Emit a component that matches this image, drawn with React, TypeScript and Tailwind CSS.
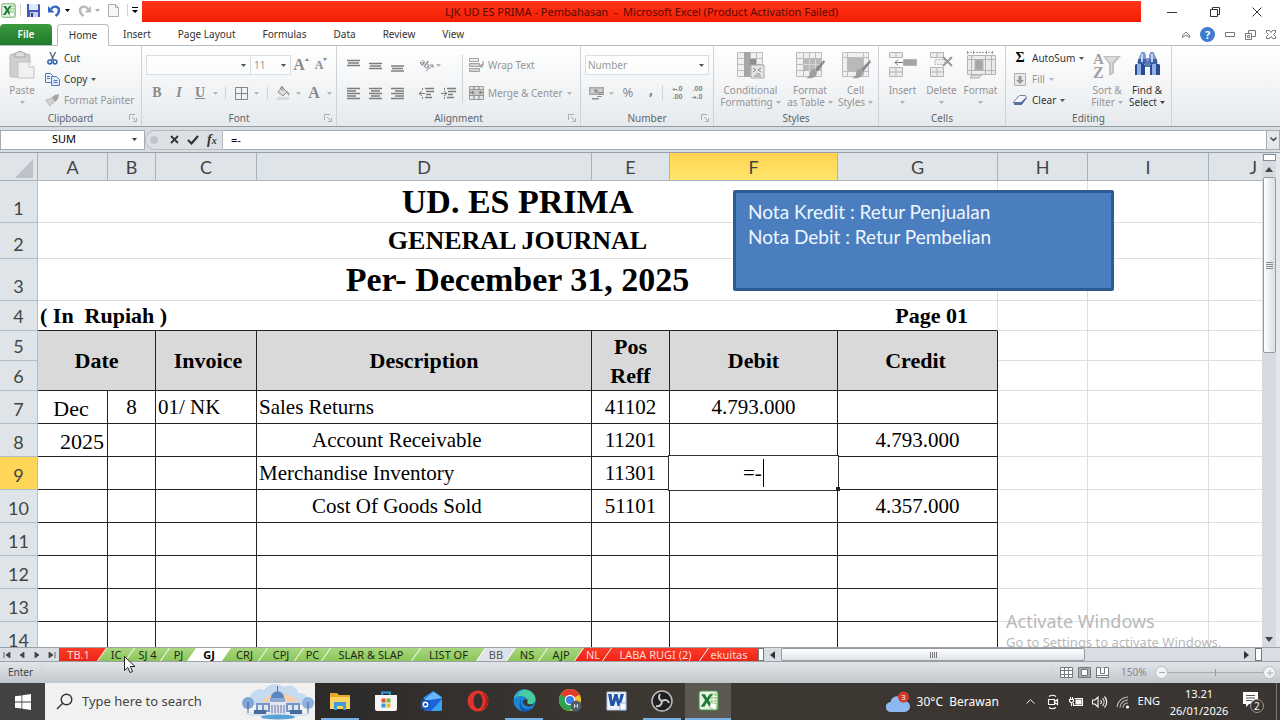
import React from 'react';
import { ChevronUp } from 'lucide-react';

const Caret = ({ className = 'text-gray-600' }: { className?: string }) => (
  <svg width="5" height="3" viewBox="0 0 5 3" className={`shrink-0 ${className}`} fill="currentColor">
    <path d="M0 0h5L2.5 3z" />
  </svg>
);

const Sep = ({ className = 'h-4' }: { className?: string }) => (
  <span className={`w-px shrink-0 bg-[#d0d3d6] ${className}`} />
);

/* ---------- Ribbon building blocks ---------- */

interface GroupProps {
  label: string;
  width: string;
  launcher?: boolean;
  children: React.ReactNode;
}

const Group: React.FC<GroupProps> = ({ label, width, launcher, children }) => (
  <section aria-label={label} className={`flex shrink-0 flex-col border-r border-[#cfd3d7] ${width}`}>
    <div className="flex h-16 min-h-0">{children}</div>
    <div className="flex h-4 items-center">
      <span className="w-4" />
      <span className="flex-1 text-center text-[#5d656d]">{label}</span>
      <span className="flex w-4 justify-center">
        {launcher && (
          <button aria-label={`${label} settings`}>
            <svg width="8" height="8" viewBox="0 0 8 8" fill="none" stroke="#a9aeb3">
              <path d="M.5 6V.5H6M3 3l3.5 3.5M7.5 4v3.5H4" />
            </svg>
          </button>
        )}
      </span>
    </div>
  </section>
);

interface IconButtonProps {
  label: string;
  width?: string;
  children: React.ReactNode;
}

const IconButton: React.FC<IconButtonProps> = ({ label, width = 'w-[22px]', children }) => (
  <button aria-label={label} className={`flex h-5 shrink-0 items-center justify-center text-[#8a8a8a] ${width}`}>
    {children}
  </button>
);

interface BigButtonProps {
  icon: React.ReactNode;
  lines: string[];
  width: string;
  active?: boolean;
}

const BigButton: React.FC<BigButtonProps> = ({ icon, lines, width, active }) => (
  <button
    className={`flex shrink-0 flex-col items-center pt-[5px] leading-3 ${width} ${active ? 'text-[#333]' : 'text-[#959595]'}`}
  >
    <span className="flex h-[33px] items-start justify-center">{icon}</span>
    <span className="whitespace-nowrap">{lines[0]}</span>
    <span className="flex h-3 items-center gap-[3px] whitespace-nowrap">
      {lines[1]}
      <Caret className={active ? 'text-[#444]' : 'text-[#b0b0b0]'} />
    </span>
  </button>
);

const SmallButton = ({ icon, label, active, caret }: { icon: React.ReactNode; label: string; active?: boolean; caret?: boolean }) => (
  <button className={`flex h-5 items-center gap-1 whitespace-nowrap ${active ? 'text-[#333]' : 'text-[#959595]'}`}>
    <span className="flex w-4 justify-center">{icon}</span>
    {label}
    {caret && <Caret className={active ? 'text-[#555]' : 'text-[#b5b5b5]'} />}
  </button>
);

/* ---------- Icons ---------- */

const ExcelMark = ({ size }: { size: number }) => (
  <svg width={size} height={size} viewBox="0 0 20 20">
    <rect x="1" y="1" width="18" height="18" rx="2" fill="#e9f5e4" stroke="#4c9a4a" />
    <path d="M12 3h6v14h-6z" fill="#9fd08f" />
    <path d="M12 6h6M12 9h6M12 12h6M15 3v11" stroke="#fff" strokeWidth=".8" />
    <path d="M3 4h3.6l2 3.6L11 4h3l-3.8 5.7L14.5 16h-3.8l-2.3-4-2.3 4H2.5l4.3-6.3z" fill="#1f7a35" />
    <path d="M12 12l6 1-1 6-6-2z" fill="#fff" stroke="#7fb877" strokeWidth=".7" />
  </svg>
);

const SaveIcon = () => (
  <svg width="15" height="15" viewBox="0 0 15 15">
    <path d="M1 1h12l1 1v12H1z" fill="#4557b8" />
    <path d="M3 1h9v6H3z" fill="#dfe8fa" />
    <path d="M4 9h8v5H4z" fill="#c9cfe6" />
    <path d="M5 10h2v4H5z" fill="#2c3a86" />
  </svg>
);

const UndoIcon = ({ color, flip }: { color: string; flip?: boolean }) => (
  <svg width="13" height="13" viewBox="0 0 13 13" fill="none" className={flip ? '-scale-x-100' : ''}>
    <path d="M3 5C6 1 11 2.500 11 6.500c0 2.500-1.500 4-3.500 5.500" stroke={color} strokeWidth="2.400" />
    <path d="M0 2v6.500h6.500z" fill={color} />
  </svg>
);

const PasteIcon = () => (
  <svg width="26" height="28" viewBox="0 0 26 28">
    <rect x="1" y="3" width="20" height="23" rx="2" fill="#cfcfd1" stroke="#b9b9bb" />
    <path d="M6 2h2l1-1.500h4L14 2h2v4H6z" fill="#dedede" stroke="#a5a5a7" />
    <path d="M9 11h11l5 5v11H9z" fill="#f1f1f3" stroke="#c2c2c6" />
    <path d="M20 11v5h5" fill="#fff" stroke="#c2c2c6" />
  </svg>
);

const CutIcon = () => (
  <svg width="11" height="13" viewBox="0 0 11 13" fill="none">
    <path d="M3 0l3.500 8M8.500 0L4.500 8" stroke="#53647c" strokeWidth="1.300" />
    <circle cx="2.800" cy="10" r="1.900" stroke="#2e62b4" strokeWidth="1.500" />
    <circle cx="8" cy="10" r="1.900" stroke="#2e62b4" strokeWidth="1.500" />
  </svg>
);

const CopyIcon = () => (
  <svg width="15" height="13" viewBox="0 0 15 13" stroke="#4f7bbd">
    <path d="M.5.5h5l2 2v7h-7z" fill="#eaf2fd" />
    <path d="M2 3.500h3M2 5.500h3" />
    <path d="M6.500 3.500h5l3 3v6h-8z" fill="#dbe9fb" />
    <path d="M8.500 7.500h4M8.500 9.500h4" />
  </svg>
);

const BrushIcon = () => (
  <svg width="15" height="13" viewBox="0 0 15 13">
    <path d="M0 6l7-3 3 5-5 5z" fill="#c4c4c4" />
    <path d="M7 3l3-2 4-1-1 5-3 3z" fill="#a3a3a3" />
    <path d="M3 6l4 5M5 5l4 4" stroke="#e8e8e8" />
  </svg>
);

const BordersIcon = () => (
  <svg width="13" height="13" viewBox="0 0 13 13" fill="none" stroke="#858585">
    <path d="M.5.5h12v12H.5zM6.500.5v12M.5 6.500h12" />
  </svg>
);

const BucketIcon = () => (
  <svg width="15" height="14" viewBox="0 0 15 14">
    <path d="M6 1l5 5-4 4-5-4z" fill="#ddd" stroke="#8e8e8e" />
    <path d="M5 4V1.500a1 1 0 012 0V5" fill="none" stroke="#8e8e8e" />
    <path d="M11 5c2 1 3 3 2 5-1-2-2-3-3-3z" fill="#999" />
    <path d="M1 11h12v3H1z" fill="#dadada" />
  </svg>
);

const LinesIcon = ({ d }: { d: string }) => (
  <svg width="13" height="13" viewBox="0 0 13 13" fill="none" stroke="#7d7d7d" strokeWidth="1.300">
    <path d={d} />
  </svg>
);

const IndentIcon = ({ right }: { right?: boolean }) => (
  <svg width="15" height="13" viewBox="0 0 15 13" fill="none" stroke="#7d7d7d">
    <path d={right ? 'M0 6.500h6M6 6.500L3 4M6 6.500L3 9M3.500 1v2M3.500 10v2' : 'M0 6.500h6M0 6.500L3 4M0 6.500L3 9M3.500 1v2M3.500 10v2'} />
    <path d="M6 1.500h9M7 4.500h8M7 7.500h5M6 10.500h7" strokeWidth="1.600" />
  </svg>
);

const OrientationIcon = () => (
  <svg width="15" height="14" viewBox="0 0 15 14" fill="none" stroke="#8a8a8a">
    <path d="M6 13l7-6M10 7h3v3" />
    <text x="0" y="8" fontSize="10" fontWeight="bold" fill="#8a8a8a" stroke="none" fontFamily="Liberation Serif, serif" transform="rotate(38 4 5)">
      ab
    </text>
  </svg>
);

const WrapIcon = () => (
  <svg width="15" height="14" viewBox="0 0 15 14" stroke="#a3a3a3">
    <path d="M.5.500h9v3h-9z" fill="#eee" />
    <path d="M.5 5.500h10v3h-10zM.5 10.500h10v3h-10z" fill="#d2d2d2" />
    <path d="M14 3v5h-2M13 6l-2 2 2 2" fill="none" stroke="#888" />
  </svg>
);

const MergeIcon = () => (
  <svg width="15" height="14" viewBox="0 0 15 14" stroke="#9a9a9a">
    <path d="M.5.500h14v13H.5z" fill="#e6e6e6" />
    <path d="M.5 3.500h14v6H.5z" fill="#c8c8c8" />
    <path d="M5 .5v3M10 .5v3M5 9.500v4M10 9.500v4M1 6.500h4M10 6.500h4M3 5l2 1.500L3 8M12 5l-2 1.500L12 8" fill="none" stroke="#808080" />
  </svg>
);

const MoneyIcon = () => (
  <svg width="16" height="14" viewBox="0 0 16 14">
    <path d="M0 1h15v8H0z" fill="#a9a9a9" />
    <path d="M1.500 2.500h12v5h-12z" fill="#cfcfcf" />
    <circle cx="7" cy="5" r="2" fill="#999" />
    <path d="M9 6h5v1H9zM9 8h5v1H9zM8 10h5v1H8zM3 12h7v1.500H3z" fill="#8f8f8f" />
  </svg>
);

const gridPath = 'M1.500 1.500h25v24h-25zM1.500 7.500h25M1.500 13.500h25M1.500 19.500h25M8.500 1.500v24M14.500 1.500v24M20.500 1.500v24';

const ConditionalIcon = () => (
  <svg width="30" height="28" viewBox="0 0 30 28">
    <path d={gridPath} fill="#f1eff1" stroke="#bfbcbf" />
    <path d="M8 1h6v25H8z" fill="#a7a4a7" />
    <path d="M14 8h6v6h-6z" fill="#8f8c8f" />
    <path d="M15 14h13v13H15z" fill="#e5e3e5" stroke="#aaa" />
    <path d="M17 17l3 2-3 2M25 17l-3 2 3 2M18 25h7M20 23h4" fill="none" stroke="#888" />
  </svg>
);

const TableStyleIcon = ({ cell }: { cell?: boolean }) => (
  <svg width="30" height="28" viewBox="0 0 30 28">
    <path d={cell ? 'M1.500 1.500h26v24h-26zM1.500 6.500h26M1.500 20.500h26M6.500 1.500v24M22.500 1.500v24' : gridPath} fill="#f1eff1" stroke="#bfbcbf" />
    <path d={cell ? 'M7 7h15v13H7z' : 'M8 8h18v12H8z'} fill="#bab8ba" />
    {!cell && <path d="M14.500 8v12M20.500 8v12M8 13.500h18" stroke="#d8d6d8" />}
    <path d="M29 9l-9 9 2 3 8-10z" fill="#8c898c" />
    <path d="M19 18c-3 0-4 3-4 5s-2 3-4 4c5 1 11 0 11-6z" fill="#a19ea1" />
  </svg>
);

const InsertIcon = () => (
  <svg width="30" height="28" viewBox="0 0 30 28" stroke="#b5b3b5">
    <path d="M1.500 1.500h13v5h-13zM1.500 16.500h13v9h-13zM8 1.500v5M8 16.500v9M1.500 21h13" fill="#eceaec" />
    <path d="M15.500 8.500h13v6h-13z" fill="#a5a3a5" />
    <path d="M7 11.500h8M10 8.500l-3 3 3 3" fill="none" stroke="#777" />
  </svg>
);

const DeleteIcon = () => (
  <svg width="26" height="28" viewBox="0 0 26 28" stroke="#b5b3b5">
    <path d="M1.500 1.500h13v5h-13zM1.500 16.500h13v9h-13zM8 1.500v5M8 16.500v9M1.500 21h13" fill="#eceaec" />
    <path d="M6 8.500h10v5H6z" fill="#eee" strokeDasharray="2 1" />
    <path d="M14 6l9 9M23 6l-9 9" fill="none" stroke="#999" strokeWidth="2" />
  </svg>
);

const FormatIcon = () => (
  <svg width="30" height="28" viewBox="0 0 30 28" stroke="#b5b3b5">
    <path d="M1 1.500h26" stroke="#999" strokeDasharray="2 1" />
    <path d="M1.500 0v3M7.500 0v3M20.500 0v3M26.500 0v3" stroke="#999" />
    <path d="M1.500 4.500h28v19h-28z" fill="#eceaec" />
    <path d="M5.500 4.500v19M19.500 4.500v19M25.500 4.500v19M1.500 8.500h28M1.500 19.500h28" />
    <path d="M9 9h8v10H9z" fill="#a7a4a7" />
    <path d="M6 24h10l-3 3H4z" fill="#ddd" />
  </svg>
);

const SortIcon = () => (
  <svg width="28" height="28" viewBox="0 0 28 28">
    <path d="M10 5h18l-7 8v9l-5 3V13z" fill="#c3c1c3" />
    <path d="M12 6h12l-5 6v9l-1 1V12z" fill="#dddbdd" />
    <text x="0" y="13" fontSize="15" fontWeight="bold" fill="#a5a3a5" fontFamily="Liberation Serif, serif">A</text>
    <text x="0" y="27" fontSize="16" fontWeight="bold" fill="#a09ea0" fontFamily="Liberation Serif, serif">Z</text>
  </svg>
);

const BinocularsIcon = () => (
  <svg width="27" height="25" viewBox="0 0 27 25">
    <path d="M6 4l1.500-3h3L12 4v3h3V4l1.500-3h3L21 4l3 8H3z" fill="#7c9ad0" />
    <path d="M4 8h8v5H4zM15 8h8v5h-8z" fill="#3d5fa6" />
    <path d="M1 14l1-1h8l1 1v10H1zM16 14l1-1h8l1 1v10H16z" fill="#2b4b93" />
    <path d="M3 13h4v11H3zM18 13h4v11h-4z" fill="#8fb0e6" />
    <path d="M11 10h5v6h-5z" fill="#5878b7" />
    <path d="M7 3h2v8H7zM17 3h2v8h-2z" fill="#c3d3f2" />
  </svg>
);

const FillIcon = () => (
  <svg width="12" height="13" viewBox="0 0 12 13">
    <path d="M.5.500h11v12H.5z" fill="#e8e8e8" stroke="#b0b0b0" />
    <path d="M4.500 3h3v4H10l-4 4-4-4h2.500z" fill="#9b9b9b" />
  </svg>
);

const EraserIcon = () => (
  <svg width="14" height="12" viewBox="0 0 14 12">
    <path d="M6.500 1.500h6l1 2-5 7h-7L.5 8z" fill="#f3f6fb" stroke="#6c80a6" />
    <path d="M1 8h7l5.500-5v1.500L8.500 11h-7z" fill="#58709e" />
  </svg>
);

const WindowsLogo = () => (
  <svg width="16" height="16" viewBox="0 0 16 16" fill="#fff">
    <path d="M0 2.300l6.500-.9v6.200H0zM7.300 1.300L16 0v7.600H7.300zM0 8.400h6.500v6.200L0 13.700zM7.300 8.400H16V16l-8.700-1.200z" />
  </svg>
);

const SearchIcon = () => (
  <svg width="17" height="17" viewBox="0 0 17 17" fill="none" stroke="#333" strokeWidth="1.400">
    <circle cx="10.500" cy="6.500" r="5.300" />
    <path d="M6.700 10.300L1 16" />
  </svg>
);

const CapitolArt = () => (
  <svg width="72" height="36" viewBox="0 0 72 36">
    <path d="M8 14c0-8 10-10 14-8 3-6 14-8 20-3 6-3 14 0 14 6 8-1 12 6 10 12H6c-2-3 0-6 2-7z" fill="#c7dbf0" />
    <path d="M20 18c3-9 29-12 36 0z" fill="#f7cfae" />
    <path d="M35 2h1v5h-1z" fill="#4a6da8" />
    <path d="M29 14c0-9 13-9 13 0z" fill="#5b86c0" />
    <path d="M28 14h15v5H28z" fill="#8aa9d6" />
    <path d="M14 19h44v9H14z" fill="#7796c6" />
    <path d="M16 21h4v5h-4zM22 21h4v5h-4zM46 21h4v5h-4zM52 21h4v5h-4z" fill="#dfe7f5" />
    <path d="M28 18h16v11H28z" fill="#e9e5ee" />
    <path d="M30 21v8M33 21v8M36 21v8M39 21v8M42 21v8" stroke="#5873a8" />
    <path d="M2 29h68l-6 3H8z" fill="#d9e4f0" />
    <circle cx="6" cy="19" r="6" fill="#7ea5d6" />
    <circle cx="66" cy="19" r="6" fill="#8db2de" />
    <path d="M6 18v11M66 18v11" stroke="#44618f" />
    <path d="M12 26h12v4H12zM48 26h12v4H48z" fill="#456a9f" />
    <ellipse cx="36" cy="33" rx="17" ry="2.500" fill="#5aa0d8" />
  </svg>
);

const FolderIcon = () => (
  <svg width="22" height="20" viewBox="0 0 22 20">
    <path d="M1 2h7l2 2h11v14H1z" fill="#e8a92c" />
    <path d="M1 6h20v12H1z" fill="#fbd35f" />
    <path d="M5 11h12v8h-3v-4H8v4H5z" fill="#3f9bdc" />
  </svg>
);

const StoreIcon = () => (
  <svg width="22" height="22" viewBox="0 0 22 22">
    <path d="M7 5V2.500h8V5" fill="none" stroke="#2f9be0" strokeWidth="1.800" />
    <path d="M0 5h22v14a2 2 0 01-2 2H2a2 2 0 01-2-2z" fill="#f5f5f5" />
    <path d="M6.500 8.500h4v4h-4z" fill="#e8502a" />
    <path d="M11.500 8.500h4v4h-4z" fill="#7db53a" />
    <path d="M6.500 13.500h4v4h-4z" fill="#2d9fe0" />
    <path d="M11.500 13.500h4v4h-4z" fill="#f4b62c" />
  </svg>
);

const OutlookIcon = () => (
  <svg width="22" height="22" viewBox="0 0 22 22">
    <path d="M2 8l10-7 9 6v3L9 15z" fill="#2f8ff0" />
    <path d="M4 9l9-7 8 6-9 6z" fill="#69b8fb" />
    <path d="M3 11l18-3v11a2 2 0 01-2 2H5a2 2 0 01-2-2z" fill="#1c63d6" />
    <path d="M21 9v10a2 2 0 01-2 2h-9z" fill="#38a3f5" />
    <rect x="0" y="10" width="9" height="9" rx="1.500" fill="#1657c0" />
    <circle cx="4.500" cy="14.500" r="2.200" fill="none" stroke="#fff" strokeWidth="1.400" />
  </svg>
);

const OperaIcon = () => (
  <svg width="22" height="22" viewBox="0 0 22 22">
    <circle cx="11" cy="11" r="10.500" fill="#e0332c" />
    <ellipse cx="11" cy="11" rx="4.500" ry="7.500" fill="#35302d" />
    <path d="M15 3c5 4 5 12 0 16 8-2 8-14 0-16z" fill="#a81e1a" />
  </svg>
);

const EdgeIcon = () => (
  <svg width="23" height="23" viewBox="0 0 23 23">
    <circle cx="11.500" cy="11.500" r="11" fill="#1b86d6" />
    <path d="M1 10C2 3 8 0 12 .5c6 .5 11 5 10.500 10.500-.5 4-5 5-8 3.500-1.500-1 .5-2 0-4C13 7 4 5 1 10z" fill="#48cba0" />
    <path d="M1 10C2 3 8 0 12 .5 7 2 6 5 5 6c-2 1-3 2-4 4z" fill="#2ea6d8" />
    <path d="M9 10c-3 3-1 9 4 10 3 .7 6-.5 8-2-2 3-6 5-10 4.500C6 22 5 13 9 10z" fill="#1556a5" />
    <path d="M10.500 11c1-1 3-1 4 0 .5 1.500-1 2.500 0 3.500 2 1.500 5 1 7-.5-1 3-5 4-8 3s-4.500-4-3-6z" fill="#3b382f" />
  </svg>
);

const ChromeIcon = () => (
  <svg width="23" height="23" viewBox="0 0 23 23">
    <circle cx="11" cy="11" r="11" fill="#f4c430" />
    <path d="M11 11L1.500 5.500A11 11 0 0120.500 5.500z" fill="#e33b2e" />
    <path d="M11 11L1.500 5.500A11 11 0 0011 22l4-8z" fill="#2fa24f" />
    <circle cx="11" cy="11" r="5.200" fill="#fff" />
    <circle cx="11" cy="11" r="4" fill="#3b7ded" />
    <circle cx="17" cy="17" r="5.500" fill="#4c5d68" />
    <path d="M15.500 15v4M18.500 15v4M15.500 17h3" stroke="#cfd6da" />
  </svg>
);

const WordIcon = () => (
  <svg width="21" height="20" viewBox="0 0 21 20">
    <path d="M1 1h19v18H1z" fill="#eef3fb" stroke="#b9cbe6" />
    <path d="M2 3h3.500l1 7 2-7h3l1.500 7 1.500-7H18l-3.500 12h-3L10 9l-2 6H4.500z" fill="#1f55a8" />
    <path d="M14 12h6v7h-6z" fill="#fff" stroke="#8eb0de" />
  </svg>
);

const ObsIcon = () => (
  <svg width="22" height="22" viewBox="0 0 22 22">
    <circle cx="11" cy="11" r="10" fill="#1f1e20" stroke="#bdbdbd" strokeWidth="1.500" />
    <path d="M11 11c-3-1-4-4-2-7M11 11c3-2 6-1 7 2M11 11c0 4-3 6-6 5" fill="none" stroke="#c9c9c9" strokeWidth="2" />
  </svg>
);

const CloudIcon = () => (
  <svg width="24" height="22" viewBox="0 0 24 22" className="shrink-0">
    <path d="M5 21a5 5 0 01-.5-10A7 7 0 0118 10a5.500 5.500 0 011 11z" fill="#8db8f2" />
    <circle cx="17.500" cy="6" r="5.500" fill="#cf3a2b" />
    <text x="15" y="9" fontSize="8" fill="#fff" fontFamily="Open Sans, sans-serif">3</text>
  </svg>
);

/* ---------- Data ---------- */

const ribbonTabs = ['Insert', 'Page Layout', 'Formulas', 'Data', 'Review', 'View'];

const columns = [
  { name: 'A', width: 'w-[70px]' },
  { name: 'B', width: 'w-[48px]' },
  { name: 'C', width: 'w-[101px]' },
  { name: 'D', width: 'w-[335px]' },
  { name: 'E', width: 'w-[78px]' },
  { name: 'F', width: 'w-[168px]' },
  { name: 'G', width: 'w-[160px]' },
  { name: 'H', width: 'w-[90px]' },
  { name: 'I', width: 'w-[121px]' },
];

const entries = [
  { row: 7, month: 'Dec', day: '8', invoice: '01/ NK', text: 'Sales Returns', ref: '41102', debit: '4.793.000', credit: '' },
  { row: 8, month: '2025', day: '', invoice: '', text: 'Account Receivable', indent: true, ref: '11201', debit: '', credit: '4.793.000' },
  { row: 9, month: '', day: '', invoice: '', text: 'Merchandise Inventory', ref: '11301', debit: '', credit: '', editing: true },
  { row: 10, month: '', day: '', invoice: '', text: 'Cost Of Goods Sold', indent: true, ref: '51101', debit: '', credit: '4.357.000' },
  { row: 11 },
  { row: 12 },
  { row: 13 },
  { row: 14 },
];

const GREEN = 'bg-linear-to-b from-[#a9d780] to-[#8cc65a] text-[#1c2b10]';
const RED = 'bg-linear-to-b from-[#fb3a28] to-[#ee2415] text-[#ffd9d3]';

const sheetTabs = [
  { name: 'IC', width: 'w-[36px]', tone: GREEN },
  { name: 'SJ 4', width: 'w-[43px]', tone: GREEN },
  { name: 'PJ', width: 'w-[35px]', tone: GREEN },
  { name: 'GJ', width: 'w-[42px]', tone: 'bg-white font-bold text-black' },
  { name: 'CRJ', width: 'w-[45px]', tone: GREEN },
  { name: 'CPJ', width: 'w-[44px]', tone: GREEN },
  { name: 'PC', width: 'w-[35px]', tone: GREEN },
  { name: 'SLAR & SLAP', width: 'w-[98px]', tone: GREEN },
  { name: 'LIST OF', width: 'w-[73px]', tone: GREEN },
  { name: 'BB', width: 'w-[38px]', tone: 'bg-[#dfe4ea] text-[#555]' },
  { name: 'NS', width: 'w-[40px]', tone: GREEN },
  { name: 'AJP', width: 'w-[44px]', tone: GREEN },
  { name: 'NL', width: 'w-[36px]', tone: RED },
  { name: 'LABA RUGI (2)', width: 'w-[105px]', tone: RED },
];

const apps = [
  { name: 'File Explorer', icon: <FolderIcon />, open: true },
  { name: 'Microsoft Store', icon: <StoreIcon /> },
  { name: 'Outlook', icon: <OutlookIcon /> },
  { name: 'Opera', icon: <OperaIcon /> },
  { name: 'Edge', icon: <EdgeIcon />, open: true },
  { name: 'Chrome', icon: <ChromeIcon /> },
  { name: 'Word', icon: <WordIcon /> },
  { name: 'OBS Studio', icon: <ObsIcon />, open: true },
];

/* ---------- Window sections ---------- */

const TitleBar = () => (
  <header className="flex h-6 shrink-0 items-stretch bg-white">
    <div className="flex w-[142px] items-center pb-1">
      <span className="flex w-[20px] justify-start pl-px"><ExcelMark size={15} /></span>
      <Sep className="h-3" />
      <button aria-label="Save" className="ml-[5px]"><SaveIcon /></button>
      <button aria-label="Undo" className="ml-[7px] flex items-center gap-1">
        <UndoIcon color="#3566c0" />
        <Caret className="text-black" />
      </button>
      <button aria-label="Redo" className="ml-2 flex items-center gap-1">
        <UndoIcon color="#b8b8b8" flip />
        <Caret className="text-[#aaa]" />
      </button>
      <button aria-label="New" className="ml-2">
        <svg width="11" height="13" viewBox="0 0 11 13" fill="#f6f6f6" stroke="#adadad">
          <path d="M.5.500h7l3 3v9H.5zM7.500.500v3h3" />
        </svg>
      </button>
      <Sep className="ml-2 h-3" />
      <button aria-label="Customize toolbar" className="ml-1">
        <svg width="6" height="6" viewBox="0 0 6 6"><path d="M0 0h6v1H0zM0 3h6L3 6z" /></svg>
      </button>
    </div>
    <h1 className="my-px mb-[2px] flex-1 bg-linear-to-b from-[#ff3418] to-[#f41c02] text-center text-[11px] leading-[22px] whitespace-pre text-[#560a00]">
      {'LJK UD ES PRIMA - Pembahasan  -  Microsoft Excel (Product Activation Failed)'}
    </h1>
    <div className="flex w-[139px] items-center justify-between pr-[18px] pl-[26px]">
      <button aria-label="Minimize"><svg width="10" height="10" stroke="#333"><path d="M0 5.500h10" /></svg></button>
      <button aria-label="Restore">
        <svg width="10" height="10" fill="none" stroke="#333"><path d="M.5 2.500h7v7h-7zM2.500 2.500v-2h7v7h-2" /></svg>
      </button>
      <button aria-label="Close"><svg width="10" height="10" stroke="#333"><path d="M.5.500l9 9M9.500.500l-9 9" /></svg></button>
    </div>
  </header>
);

const RibbonTabs = () => (
  <nav className="flex h-[22px] shrink-0 items-end border-b border-[#b9bec4] bg-white text-[10px] text-[#333]">
    <button className="h-[21px] w-[52px] rounded-t-sm bg-linear-to-b from-[#3c9a3f] to-[#1f7a2c] font-semibold text-white">File</button>
    <button className="-mb-px ml-[5px] h-[22px] w-[52px] rounded-t-sm border border-b-0 border-[#b9bec4] bg-white">Home</button>
    <div className="ml-[14px] flex h-[21px] items-center gap-[27px]">
      {ribbonTabs.map((tab) => (
        <button key={tab}>{tab}</button>
      ))}
    </div>
    <div className="ml-auto flex h-[21px] items-center gap-[10px] pr-1">
      <button aria-label="Collapse ribbon">
        <svg width="8" height="7" fill="none" stroke="#777"><path d="M.5 4.500L4 1l3.500 3.500v2L4 4 .5 6.500z" /></svg>
      </button>
      <button aria-label="Help" className="h-[15px] w-[15px] rounded-full bg-[#3f7ccb] text-[11px] leading-[15px] font-bold text-white">?</button>
      <button aria-label="Minimize workbook"><svg width="10" height="5" fill="none" stroke="#777"><path d="M.5.500h9v4h-9z" /></svg></button>
      <button aria-label="Restore workbook">
        <svg width="11" height="10" fill="none" stroke="#777"><path d="M.5 3.500h6v6h-6zM2.500 5.500h2v2h-2zM3.500 3.500v-3h7v6h-4" /></svg>
      </button>
      <button aria-label="Close workbook">
        <svg width="10" height="9" fill="none" stroke="#777"><path d="M.5.500h3L5 2.500 6.500.500h3v2L7.500 4.500l2 2v2h-3L5 6.500 3.500 8.500h-3v-2l2-2-2-2z" /></svg>
      </button>
    </div>
  </nav>
);

const Ribbon = () => (
  <div className="flex h-[81px] shrink-0 overflow-hidden border-b border-[#969ca3] bg-linear-to-b from-white to-[#e6eaed] text-[10px]">
    <Group label="Clipboard" width="w-[142px]" launcher>
      <BigButton icon={<PasteIcon />} lines={['Paste', '']} width="w-[44px]" />
      <div className="flex flex-col gap-px pt-[2px]">
        <SmallButton icon={<CutIcon />} label="Cut" active />
        <SmallButton icon={<CopyIcon />} label="Copy" active caret />
        <SmallButton icon={<BrushIcon />} label="Format Painter" />
      </div>
    </Group>

    <Group label="Font" width="w-[195px]" launcher>
      <div className="flex flex-col gap-2 pt-[9px] pl-1">
        <div className="flex h-5 items-center">
          <label className="relative flex h-5 w-[105px] items-center border border-[#dcdfe2] bg-white/60">
            <select aria-label="Font name" className="h-full w-full appearance-none" />
            <span className="pointer-events-none absolute right-1"><Caret /></span>
          </label>
          <label className="relative -ml-px flex h-5 w-[41px] items-center border border-[#dcdfe2] bg-white/60">
            <select aria-label="Font size" className="h-full w-full appearance-none pl-[3px] text-[#999]"><option>11</option></select>
            <span className="pointer-events-none absolute right-1"><Caret /></span>
          </label>
          <IconButton label="Grow font" width="w-[20px]">
            <span className="font-['Liberation_Serif',serif] text-base font-bold">A</span>
            <svg width="4" height="3" className="mb-3" fill="#888"><path d="M0 3h4L2 0z" /></svg>
          </IconButton>
          <IconButton label="Shrink font" width="w-[20px]">
            <span className="font-['Liberation_Serif',serif] text-xs font-bold">A</span>
            <svg width="4" height="3" className="mb-3" fill="#888"><path d="M0 0h4L2 3z" /></svg>
          </IconButton>
        </div>
        <div className="flex h-5 items-center font-['Liberation_Serif',serif] text-sm">
          <IconButton label="Bold"><b>B</b></IconButton>
          <IconButton label="Italic"><b><i>I</i></b></IconButton>
          <IconButton label="Underline" width="w-[20px]"><b className="underline">U</b></IconButton>
          <IconButton label="Underline style" width="w-[11px]"><Caret className="text-[#b5b5b5]" /></IconButton>
          <Sep className="ml-1 h-3" />
          <IconButton label="Borders" width="w-[30px]"><BordersIcon /></IconButton>
          <Caret className="-ml-[2px] text-[#b5b5b5]" />
          <Sep className="ml-2 h-3" />
          <IconButton label="Fill color" width="w-[30px]"><BucketIcon /></IconButton>
          <Caret className="-ml-[2px] text-[#b5b5b5]" />
          <IconButton label="Font color" width="w-[26px]"><b className="text-base">A</b></IconButton>
          <Caret className="text-[#b5b5b5]" />
        </div>
      </div>
    </Group>

    <Group label="Alignment" width="w-[244px]" launcher>
      <div className="flex flex-col gap-2 pt-[9px] pl-[5px]">
        <div className="flex h-5 items-center">
          <IconButton label="Top align"><LinesIcon d="M0 1.500h13M1 4h11M0 6.500h13" /></IconButton>
          <IconButton label="Middle align"><LinesIcon d="M0 4.500h13M1 7h11M0 9.500h13" /></IconButton>
          <IconButton label="Bottom align"><LinesIcon d="M0 7h13M1 9.500h11M0 12h13" /></IconButton>
          <Sep className="mx-[3px]" />
          <IconButton label="Orientation" width="w-[24px]"><OrientationIcon /></IconButton>
          <Caret className="-ml-[3px] text-[#b5b5b5]" />
        </div>
        <div className="flex h-5 items-center">
          <IconButton label="Align left"><LinesIcon d="M0 1.500h13M0 4h9M0 6.500h13M0 9h9M0 11.500h13" /></IconButton>
          <IconButton label="Center"><LinesIcon d="M0 1.500h13M2 4h9M0 6.500h13M2 9h9M0 11.500h13" /></IconButton>
          <IconButton label="Align right"><LinesIcon d="M0 1.500h13M4 4h9M0 6.500h13M4 9h9M0 11.500h13" /></IconButton>
          <Sep className="mx-[3px]" />
          <IconButton label="Decrease indent"><IndentIcon /></IconButton>
          <IconButton label="Increase indent"><IndentIcon right /></IconButton>
        </div>
      </div>
      <Sep className="mt-[9px] ml-[3px] h-[48px]" />
      <div className="flex flex-col gap-2 pt-[9px] pl-[5px]">
        <SmallButton icon={<WrapIcon />} label="Wrap Text" />
        <SmallButton icon={<MergeIcon />} label="Merge & Center" caret />
      </div>
    </Group>

    <Group label="Number" width="w-[133px]" launcher>
      <div className="flex flex-1 flex-col gap-2 px-1 pt-[9px]">
        <label className="relative flex h-5 items-center border border-[#dcdfe2] bg-white/60">
          <select aria-label="Number format" className="h-full w-full appearance-none pl-[2px] text-[#999]"><option>Number</option></select>
          <span className="pointer-events-none absolute right-1"><Caret /></span>
        </label>
        <div className="flex h-5 items-center">
          <IconButton label="Accounting format" width="w-[24px]"><MoneyIcon /></IconButton>
          <Caret className="text-[#b5b5b5]" />
          <IconButton label="Percent" width="w-[28px]"><span className="text-[13px]">%</span></IconButton>
          <IconButton label="Comma" width="w-[18px]"><b className="mb-2 text-base">,</b></IconButton>
          <Sep className="mr-1 ml-[2px] h-4" />
          <IconButton label="Increase decimal" width="w-[20px]">
            <span className="flex flex-col items-end text-[7px] leading-[8px] font-bold">
              <span className="flex items-center">
                <svg width="5" height="5" fill="none" stroke="#888"><path d="M5 2.500H1M2.500 1L1 2.500 2.500 4" /></svg>.0
              </span>
              <span>.00</span>
            </span>
          </IconButton>
          <IconButton label="Decrease decimal" width="w-[20px]">
            <span className="flex flex-col items-end text-[7px] leading-[8px] font-bold">
              <span>.00</span>
              <span className="flex items-center">
                <svg width="5" height="5" fill="none" stroke="#888"><path d="M0 2.500h4M2.500 1L4 2.500 2.500 4" /></svg>.0
              </span>
            </span>
          </IconButton>
        </div>
      </div>
    </Group>

    <Group label="Styles" width="w-[165px]">
      <BigButton icon={<ConditionalIcon />} lines={['Conditional', 'Formatting']} width="w-[73px]" />
      <BigButton icon={<TableStyleIcon />} lines={['Format', 'as Table']} width="w-[46px]" />
      <BigButton icon={<TableStyleIcon cell />} lines={['Cell', 'Styles']} width="w-[45px]" />
    </Group>

    <Group label="Cells" width="w-[127px]">
      <span className="w-1" />
      <BigButton icon={<InsertIcon />} lines={['Insert', '']} width="w-[39px]" />
      <BigButton icon={<DeleteIcon />} lines={['Delete', '']} width="w-[39px]" />
      <BigButton icon={<FormatIcon />} lines={['Format', '']} width="w-[39px]" />
    </Group>

    <Group label="Editing" width="w-[166px]">
      <div className="flex w-[81px] flex-col gap-px pt-[2px] pl-[6px]">
        <SmallButton icon={<b className="font-['Liberation_Serif',serif] text-sm text-black">Σ</b>} label="AutoSum" active caret />
        <SmallButton icon={<FillIcon />} label="Fill" caret />
        <SmallButton icon={<EraserIcon />} label="Clear" active caret />
      </div>
      <BigButton icon={<SortIcon />} lines={['Sort &', 'Filter']} width="w-[40px]" />
      <BigButton icon={<BinocularsIcon />} lines={['Find &', 'Select']} width="w-[40px]" active />
    </Group>
  </div>
);

const FormulaBar = () => (
  <div className="flex h-[26px] shrink-0 items-center border-b border-[#9aa0a8] bg-[#d8dde2] text-[11px] text-black">
    <div className="flex h-5 w-[145px] items-center border border-[#a5abb2] bg-white">
      <input aria-label="Name box" defaultValue="SUM" className="w-[126px] text-center outline-none" />
      <button aria-label="Names" className="ml-[5px]"><Caret className="text-[#333]" /></button>
    </div>
    <div className="flex h-5 w-[78px] items-center gap-2 rounded-l-full border border-[#b4bac0] bg-[#dce1e6] pl-1 text-[#333]">
      <span className="h-2 w-2 rounded-full bg-[#bfc5cb]" />
      <button aria-label="Cancel" className="ml-1">
        <svg width="9" height="9" stroke="#333" strokeWidth="1.800"><path d="M1 1l7 7M8 1L1 8" /></svg>
      </button>
      <button aria-label="Enter">
        <svg width="12" height="10" fill="none" stroke="#333" strokeWidth="2.200"><path d="M1 5l3.500 3.500L11 1" /></svg>
      </button>
      <button aria-label="Insert function" className="font-['Liberation_Serif',serif] text-sm leading-none font-bold italic">
        f<span className="text-[10px]">x</span>
      </button>
    </div>
    <input aria-label="Formula" defaultValue="=-" className="h-5 flex-1 border-y border-[#a5abb2] bg-white pl-2 outline-none" />
    <button aria-label="Expand formula bar" className="flex h-5 w-[14px] items-center justify-center border border-[#a5abb2] bg-[#e6e9ec]">
      <svg width="7" height="5" fill="none" stroke="#444" strokeWidth="1.500"><path d="M.5.500l3 3 3-3" /></svg>
    </button>
  </div>
);

const rowHead = "border-r border-b border-[#b4bcc4] text-center font-normal align-bottom font-['Lato',sans-serif] text-lg leading-7 text-[#444]";
const gridCell = 'border-r border-b border-[#dcdfe2]';
const inkCell = 'border-r border-b border-[#222]';

const Blank = () => (
  <>
    <td className={gridCell} />
    <td className={gridCell} />
    <td className="border-b border-[#dcdfe2]" />
  </>
);

const RowHead = ({ n, active }: { n: number; active?: boolean }) => (
  <th scope="row" className={`${rowHead} ${active ? 'bg-[#ffd658]' : 'bg-[#dfe4e9]'}`}>{n}</th>
);

const Sheet = () => (
  <table className="w-full table-fixed border-separate border-spacing-0 font-['Liberation_Serif',serif] text-[21px] leading-6 text-black">
    <colgroup>
      <col className="w-[38px]" />
      {columns.map((c) => (
        <col key={c.name} className={c.width} />
      ))}
      <col />
    </colgroup>
    <thead className="font-['Lato',sans-serif] text-lg leading-6 text-[#444]">
      <tr className="h-7 bg-[#dfe4e9]">
        <td className="border-r border-b border-[#a9b2bb] p-0 align-bottom">
          <svg width="18" height="19" viewBox="0 0 18 19" className="mb-[2px] ml-[15px]"><path d="M18 0v19H0z" fill="#bcc2c8" /></svg>
        </td>
        {columns.map((c) => (
          <th
            key={c.name}
            scope="col"
            className={`border-r border-b border-[#a9b2bb] font-normal ${c.name === 'F' ? 'bg-linear-to-b from-[#ffd350] to-[#ffe66c]' : ''}`}
          >
            {c.name}
          </th>
        ))}
        <th scope="col" className="border-b border-[#a9b2bb] pr-[5px] text-right font-normal">J</th>
      </tr>
    </thead>
    <tbody>
      <tr className="h-[42px]">
        <RowHead n={1} />
        <td colSpan={7} className={`${gridCell} text-center text-[34px] leading-9 font-bold`}>UD. ES PRIMA</td>
        <Blank />
      </tr>
      <tr className="h-[36px]">
        <RowHead n={2} />
        <td colSpan={7} className={`${gridCell} text-center text-[26px] font-bold`}>GENERAL JOURNAL</td>
        <Blank />
      </tr>
      <tr className="h-[42px]">
        <RowHead n={3} />
        <td colSpan={7} className={`${gridCell} text-center text-[34px] leading-9 font-bold`}>Per- December 31, 2025</td>
        <Blank />
      </tr>
      <tr className="h-[30px] text-[22px] font-bold">
        <RowHead n={4} />
        <td colSpan={6} className="border-b border-[#222] pl-[2px] whitespace-pre">{'( In  Rupiah )'}</td>
        <td className="border-r border-b border-r-[#dcdfe2] border-b-[#222] pr-[29px] text-right">Page 01</td>
        <Blank />
      </tr>
      <tr className="h-[30px] text-[22px] font-bold">
        <RowHead n={5} />
        <td colSpan={2} rowSpan={2} className={`${inkCell} bg-[#d9d9d9] text-center`}>Date</td>
        <td rowSpan={2} className={`${inkCell} bg-[#d9d9d9] pl-1 text-center`}>Invoice</td>
        <td rowSpan={2} className={`${inkCell} bg-[#d9d9d9] text-center`}>Description</td>
        <td rowSpan={2} className={`${inkCell} bg-[#d9d9d9] text-center leading-[29px]`}>Pos<br />Reff</td>
        <td rowSpan={2} className={`${inkCell} bg-[#d9d9d9] text-center`}>Debit</td>
        <td rowSpan={2} className={`${inkCell} bg-[#d9d9d9] pr-1 text-center`}>Credit</td>
        <Blank />
      </tr>
      <tr className="h-[30px]">
        <RowHead n={6} />
        <Blank />
      </tr>
      {entries.map((e) => (
        <tr key={e.row} className="h-[33px]">
          <RowHead n={e.row} active={e.editing} />
          <td className={`${inkCell} pr-[3px] align-bottom text-[22px] leading-7 ${e.month === 'Dec' ? 'text-center' : 'text-right'}`}>{e.month}</td>
          <td className={`${inkCell} text-center`}>{e.day}</td>
          <td className={`${inkCell} pl-[2px]`}>{e.invoice}</td>
          <td className={`${inkCell} ${e.indent ? 'pl-[55px]' : 'pl-[2px]'}`}>{e.text}</td>
          <td className={`${inkCell} text-center`}>{e.ref}</td>
          {e.editing ? (
            <td className={`${inkCell} relative`}>
              <div className="absolute -inset-[2px] flex items-center justify-center border border-[#333] bg-white">
                <input aria-label="Cell F9" defaultValue="=-" className="w-5 outline-none" />
                <span className="h-7 w-px bg-black" />
                <span className="absolute -right-[2px] -bottom-[1px] h-1 w-1 bg-[#222]" />
              </div>
            </td>
          ) : (
            <td className={`${inkCell} text-center`}>{e.debit}</td>
          )}
          <td className={`${inkCell} text-center`}>{e.credit}</td>
          <Blank />
        </tr>
      ))}
    </tbody>
  </table>
);

const VerticalScroll = () => (
  <div className="flex w-[18px] shrink-0 flex-col items-center border-r-4 border-[#e4e8ec] bg-[#d5dbe0]">
    <span className="mt-px h-[7px] w-[13px] shrink-0 border border-[#888e95] bg-white" />
    <button aria-label="Scroll up" className="flex h-4 shrink-0 items-center">
      <svg width="8" height="5"><path d="M0 5h8L4 0z" fill="#444" /></svg>
    </button>
    <div className="flex h-[176px] w-[13px] shrink-0 flex-col items-center justify-center gap-px rounded-xs border border-[#949ba3] bg-linear-to-r from-white to-[#d9dee3]">
      <span className="h-px w-[7px] bg-[#888]" />
      <span className="h-px w-[7px] bg-[#888]" />
      <span className="h-px w-[7px] bg-[#888]" />
      <span className="h-px w-[7px] bg-[#888]" />
    </div>
    <button aria-label="Scroll down" className="mt-auto flex h-4 shrink-0 items-center">
      <svg width="8" height="5"><path d="M0 0h8L4 5z" fill="#444" /></svg>
    </button>
  </div>
);

const SheetTabs = () => (
  <div className="flex h-[15px] shrink-0 items-stretch overflow-hidden border-y border-[#9aa1a9] bg-[#d8dee3] text-[11px] leading-[13px]">
    <div className="flex w-[59px] shrink-0 items-center justify-around text-[#444]">
      {['M1 0v6M7 0L3 3l4 3z', 'M6 0L2 3l4 3z', 'M2 0l4 3-4 3z', 'M1 0l4 3-4 3zM7 0v6'].map((d) => (
        <button key={d} aria-label="Move sheet tabs">
          <svg width="8" height="6" fill="#444" stroke="#444" strokeWidth=".8"><path d={d} /></svg>
        </button>
      ))}
    </div>
    <div className="flex shrink-0 bg-white">
      <button className={`w-[47px] pr-2 [clip-path:polygon(0_0,100%_0,calc(100%-9px)_100%,0_100%)] ${RED}`}>TB.1</button>
      {sheetTabs.map((t) => (
        <button
          key={t.name}
          className={`-ml-[8px] whitespace-nowrap [clip-path:polygon(9px_0,100%_0,calc(100%-9px)_100%,0_100%)] ${t.width} ${t.tone}`}
        >
          {t.name}
        </button>
      ))}
      <button className={`-ml-[8px] w-[58px] [clip-path:polygon(9px_0,100%_0,100%_100%,0_100%)] ${RED}`}>ekuitas</button>
    </div>
    <span className="w-[6px] shrink-0 border border-[#777] bg-white" />
    <button aria-label="Scroll left" className="flex w-[17px] shrink-0 items-center justify-center">
      <svg width="5" height="8"><path d="M5 0v8L0 4z" fill="#333" /></svg>
    </button>
    <div className="flex flex-1">
      <div className="flex w-[304px] items-center justify-center gap-px rounded-xs border border-[#949ba3] bg-linear-to-b from-white to-[#dfe3e8]">
        <span className="h-[6px] w-px bg-[#777]" />
        <span className="h-[6px] w-px bg-[#777]" />
        <span className="h-[6px] w-px bg-[#777]" />
        <span className="h-[6px] w-px bg-[#777]" />
      </div>
    </div>
    <button aria-label="Scroll right" className="flex w-[17px] items-center justify-center">
      <svg width="5" height="8"><path d="M0 0v8l5-4z" fill="#333" /></svg>
    </button>
    <span className="w-[7px] border border-[#777] bg-white" />
    <span className="w-[18px]" />
  </div>
);

const StatusBar = () => (
  <div className="flex h-[21px] shrink-0 items-center bg-linear-to-b from-[#e2e5e8] to-[#c2c7cc] text-[10px] text-[#444]">
    <span className="w-[41px] pl-2">Enter</span>
    <Sep className="h-4 bg-[#a0a5aa]" />
    <div className="ml-auto flex items-center">
      <Sep className="mr-[7px] h-4 bg-[#a0a5aa]" />
      <div className="flex gap-[5px]">
        <button aria-label="Normal view">
          <svg width="13" height="11" fill="#fff" stroke="#777"><path d="M.5.500h12v10H.5zM.5 3.500h12M.5 7.500h12M4.500.500v10M8.500.500v10" /></svg>
        </button>
        <button aria-label="Page layout view">
          <svg width="13" height="11" fill="#a9adb1" stroke="#777"><path d="M.5.500h12v10H.5z" /><path d="M3.500 2.500h6v6h-6z" fill="#fff" /></svg>
        </button>
        <button aria-label="Page break view">
          <svg width="13" height="11" fill="#fff" stroke="#777"><path d="M.5.500h12v10H.5z" /><path d="M4.500.500v6h4v-6M.5 8.500h12" /></svg>
        </button>
      </div>
      <span className="ml-3 w-[34px] text-[#85898d]">150%</span>
      <button aria-label="Zoom out" className="flex h-[13px] w-[13px] items-center justify-center rounded-full border border-[#bbb] bg-[#f2f2f2]"><span className="h-px w-[6px] bg-[#aaa]" /></button>
      <input type="range" aria-label="Zoom" className="h-px w-[95px] appearance-none bg-[#aaa] [&::-webkit-slider-thumb]:h-[7px] [&::-webkit-slider-thumb]:w-px [&::-webkit-slider-thumb]:appearance-none [&::-webkit-slider-thumb]:bg-[#999]" />
      <button aria-label="Zoom in" className="mr-1 flex h-[13px] w-[13px] items-center justify-center rounded-full border border-[#bbb] bg-[#f2f2f2]">
        <svg width="6" height="6" stroke="#aaa"><path d="M0 3h6M3 0v6" /></svg>
      </button>
    </div>
  </div>
);

const Taskbar = () => (
  <footer className="flex h-[37px] shrink-0 items-stretch bg-linear-to-r from-[#1d2022] via-[#3d3732] to-[#3a3531] text-[13px] text-white">
    <button aria-label="Start" className="flex w-[45px] items-center justify-center bg-[#424242]"><WindowsLogo /></button>
    <label className="flex w-[270px] items-center bg-[#f1f1f1] pl-[11px] text-[#333]">
      <SearchIcon />
      <input aria-label="Search" placeholder="Type here to search" className="ml-[9px] w-[160px] outline-none placeholder:text-[#444]" />
      <span className="self-end"><CapitolArt /></span>
    </label>
    <div className="ml-[2px] flex">
      {apps.map((app) => (
        <button key={app.name} aria-label={app.name} className="flex w-[46px] flex-col items-center">
          <span className="flex flex-1 items-center">{app.icon}</span>
          <span className={`h-[2px] w-[38px] ${app.open ? 'bg-[#76b0e4]' : ''}`} />
        </button>
      ))}
      <button aria-label="Excel" className="flex w-[46px] flex-col items-center bg-[#5b5751]">
        <span className="flex flex-1 items-center"><ExcelMark size={21} /></span>
        <span className="h-[2px] w-full bg-[#76b0e4]" />
      </button>
    </div>
    <button className="ml-auto flex items-center text-xs whitespace-pre">
      <CloudIcon />
      <span className="ml-[7px] w-[106px] text-left">{'30°C  Berawan'}</span>
    </button>
    <div className="flex items-center gap-2">
      <button aria-label="Hidden icons"><ChevronUp size={15} strokeWidth={1.500} /></button>
      <svg width="14" height="16" fill="none" stroke="#fff" strokeWidth="1.100"><path d="M3 2.500a6 6 0 017 0M3 13.500a6 6 0 007 0M2.500 5.500h6v5h-6zM8.500 7.500l3-2v5l-3-2" /></svg>
      <svg width="16" height="12" fill="none" stroke="#fff" strokeWidth="1.100"><path d="M6.500 2.500h8v7h-9V7M2.500 1v2M4.500 1v2M1.500 3.500h4v2l-2 1.500-2-1.500zM3.500 7v3" /><path d="M8 4h5v4H8z" fill="#fff" /></svg>
      <svg width="16" height="14" fill="none" stroke="#fff" strokeWidth="1.100"><path d="M.5 5h2.500l3-3v10l-3-3H.5zM8.500 5a3 3 0 010 4M10.500 3a6 6 0 010 8M12.500 1.500a8 8 0 010 11" /></svg>
      <svg width="14" height="14" fill="none" stroke="#bbb" strokeWidth="1.200"><path d="M1 12A11 11 0 0112 2M4 12.500A8 8 0 0112 5M7 12.500A5 5 0 0112 8" /><circle cx="11.500" cy="12" r="1" fill="#fff" stroke="#fff" /></svg>
      <button className="text-[11px]">ENG</button>
    </div>
    <button className="ml-[10px] flex w-[58px] flex-col items-center justify-center text-[11px] leading-[17px]">
      <span>13.21</span>
      <span>26/01/2026</span>
    </button>
    <button aria-label="Notifications" className="mr-1 ml-[14px] flex w-[30px] items-center">
      <svg width="24" height="24" viewBox="0 0 24 24">
        <path d="M1 2h15v12H7l-3 3v-3H1z" fill="#fff" />
        <path d="M4 5.500h9M4 8h9M4 10.500h6" stroke="#555" />
        <circle cx="15" cy="16" r="6.500" fill="#3a3531" stroke="#999" />
        <text x="12" y="20" fontSize="10" fill="#fff" fontFamily="Open Sans, sans-serif">2</text>
      </svg>
    </button>
    <span className="w-[4px] border-l border-[#777]" />
  </footer>
);

export default function App() {
  return (
    <div className="relative flex h-screen flex-col overflow-hidden bg-white font-['Noto_Sans',sans-serif]">
      <TitleBar />
      <RibbonTabs />
      <Ribbon />
      <FormulaBar />
      <main className="flex min-h-0 flex-1">
        <div className="relative min-w-0 flex-1 overflow-hidden">
          <Sheet />
          {/* Floating note shape */}
          <div className="absolute top-[37px] left-[733px] h-[101px] w-[381px] rounded-xs border-[3px] border-[#2d5c92] bg-[#4a7ebf] px-3 pt-[6px] font-['Lato',sans-serif] text-[19px] leading-[25px] text-[#eef6ff]">
            <p>Nota Kredit : Retur Penjualan</p>
            <p>Nota Debit : Retur Pembelian</p>
          </div>
          {/* Activation watermark */}
          <div className="pointer-events-none absolute -bottom-[4px] left-[1006px] whitespace-nowrap text-[#b9b9b9]">
            <p className="text-lg leading-6">Activate Windows</p>
            <p className="text-[13px] leading-[18px]">Go to Settings to activate Windows.</p>
          </div>
        </div>
        <VerticalScroll />
      </main>
      <SheetTabs />
      <StatusBar />
      <Taskbar />
      {/* Mouse pointer */}
      <svg width="12" height="18" viewBox="0 0 12 18" className="pointer-events-none absolute bottom-[46px] left-[124px]">
        <path d="M.5.500v14l3.300-3 2.200 5 2.500-1-2.200-5h4.700z" fill="#fff" stroke="#222" />
      </svg>
    </div>
  );
}
